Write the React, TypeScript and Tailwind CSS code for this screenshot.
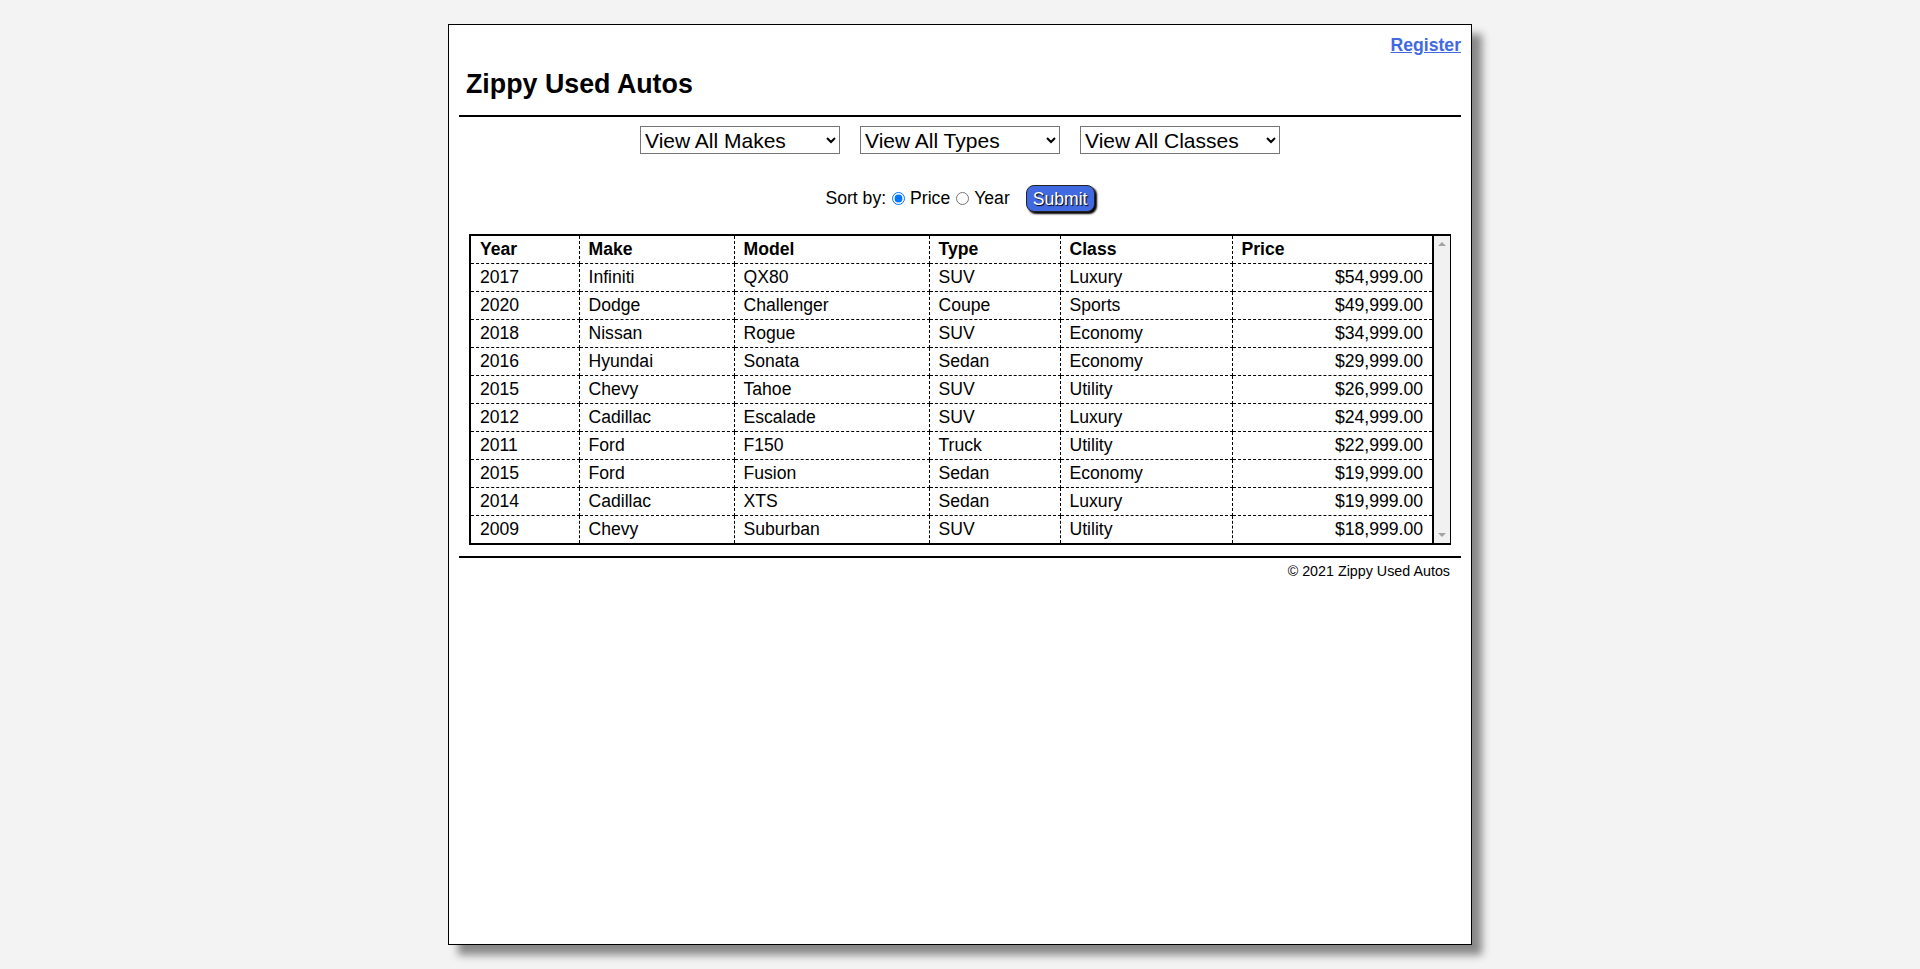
import React from 'react';

export default function App() {
  const cars = [
    { year: 2017, make: 'Infiniti', model: 'QX80', type: 'SUV', cls: 'Luxury', price: '$54,999.00' },
    { year: 2020, make: 'Dodge', model: 'Challenger', type: 'Coupe', cls: 'Sports', price: '$49,999.00' },
    { year: 2018, make: 'Nissan', model: 'Rogue', type: 'SUV', cls: 'Economy', price: '$34,999.00' },
    { year: 2016, make: 'Hyundai', model: 'Sonata', type: 'Sedan', cls: 'Economy', price: '$29,999.00' },
    { year: 2015, make: 'Chevy', model: 'Tahoe', type: 'SUV', cls: 'Utility', price: '$26,999.00' },
    { year: 2012, make: 'Cadillac', model: 'Escalade', type: 'SUV', cls: 'Luxury', price: '$24,999.00' },
    { year: 2011, make: 'Ford', model: 'F150', type: 'Truck', cls: 'Utility', price: '$22,999.00' },
    { year: 2015, make: 'Ford', model: 'Fusion', type: 'Sedan', cls: 'Economy', price: '$19,999.00' },
    { year: 2014, make: 'Cadillac', model: 'XTS', type: 'Sedan', cls: 'Luxury', price: '$19,999.00' },
    { year: 2009, make: 'Chevy', model: 'Suburban', type: 'SUV', cls: 'Utility', price: '$18,999.00' }
  ];

  // dashed grid inside the table, solid frame comes from the wrapper
  const cell = 'pl-[9px] py-[3px] leading-[21px] border-r border-b border-dashed border-black';
  const priceCell = 'pr-[9px] py-[3px] leading-[21px] text-right border-b border-dashed border-black';

  return (
    <div className="min-h-screen bg-[#f3f3f3] pt-6 font-['Liberation_Sans',Arial,sans-serif] text-[17.6px] text-black">
      <main className="mx-auto h-[921px] w-[1024px] border border-black bg-white px-[10px] pt-[10px] shadow-[10px_10px_8px_#888]">
        {/* Header */}
        <div className="text-right leading-[20px]">
          <a href="#" className="font-bold text-[#4169e1] underline">Register</a>
        </div>
        <h1 className="mt-[14px] pl-[7px] text-[26.8px] font-bold leading-[30px]">Zippy Used Autos</h1>
        <div className="mt-[16px] h-[2px] bg-black" />

        {/* Filters */}
        <div className="mt-[9px] flex justify-center gap-5">
          <select className="h-[28px] w-[200px] border border-[#767676] bg-white pl-0 text-[21px] leading-none">
            <option>View All Makes</option>
          </select>
          <select className="h-[28px] w-[200px] border border-[#767676] bg-white pl-0 text-[21px] leading-none">
            <option>View All Types</option>
          </select>
          <select className="h-[28px] w-[200px] border border-[#767676] bg-white pl-0 text-[21px] leading-none">
            <option>View All Classes</option>
          </select>
        </div>

        {/* Sort */}
        <div className="mt-[31px] flex h-[27px] items-center justify-center">
          <span>Sort by:</span>
          <input type="radio" name="sort" defaultChecked className="ml-[6px] mr-[5px] h-[13px] w-[13px]" />
          <span>Price</span>
          <input type="radio" name="sort" className="ml-[6px] mr-[5px] h-[13px] w-[13px]" />
          <span>Year</span>
          <button className="ml-[16px] h-[27px] rounded-[8px] border border-[#222] bg-[#4169e1] px-[6px] text-white shadow-[2px_2px_2px_#000] [text-shadow:1px_1px_1px_#000]">
            Submit
          </button>
        </div>

        {/* Inventory */}
        <div className="mx-[10px] mt-[22px] flex border-2 border-r border-black">
          <table className="flex-1 table-fixed border-collapse">
            <colgroup>
              <col className="w-[108px]" />
              <col className="w-[155px]" />
              <col className="w-[195px]" />
              <col className="w-[131px]" />
              <col className="w-[172px]" />
              <col />
            </colgroup>
            <thead>
              <tr className="text-left font-bold">
                <th className={cell}>Year</th>
                <th className={cell}>Make</th>
                <th className={cell}>Model</th>
                <th className={cell}>Type</th>
                <th className={cell}>Class</th>
                <th className="pl-[9px] py-[3px] leading-[21px] border-b border-dashed border-black">Price</th>
              </tr>
            </thead>
            <tbody>
              {cars.map((car, i) => {
                const last = i === cars.length - 1;
                const c = last ? 'pl-[9px] py-[3px] leading-[21px] border-r border-dashed border-black' : cell;
                return (
                  <tr key={i}>
                    <td className={c}>{car.year}</td>
                    <td className={c}>{car.make}</td>
                    <td className={c}>{car.model}</td>
                    <td className={c}>{car.type}</td>
                    <td className={c}>{car.cls}</td>
                    <td className={last ? 'pr-[9px] py-[3px] leading-[21px] text-right' : priceCell}>{car.price}</td>
                  </tr>
                );
              })}
            </tbody>
          </table>
          {/* scrollbar track */}
          <div className="flex w-[18px] flex-col items-center justify-between border-l-2 border-black bg-[#f1f1f1] py-[6px]">
            <svg width="8" height="4" viewBox="0 0 8 4">
              <path d="M0 4 L4 0 L8 4 Z" fill="#a3a3a3" />
            </svg>
            <svg width="8" height="4" viewBox="0 0 8 4">
              <path d="M0 0 L4 4 L8 0 Z" fill="#a3a3a3" />
            </svg>
          </div>
        </div>

        <div className="mt-[11px] h-[2px] bg-black" />
        <footer className="mt-[5px] pr-[11px] text-right text-[14.3px] leading-[17px]">© 2021 Zippy Used Autos</footer>
      </main>
    </div>
  );
}
